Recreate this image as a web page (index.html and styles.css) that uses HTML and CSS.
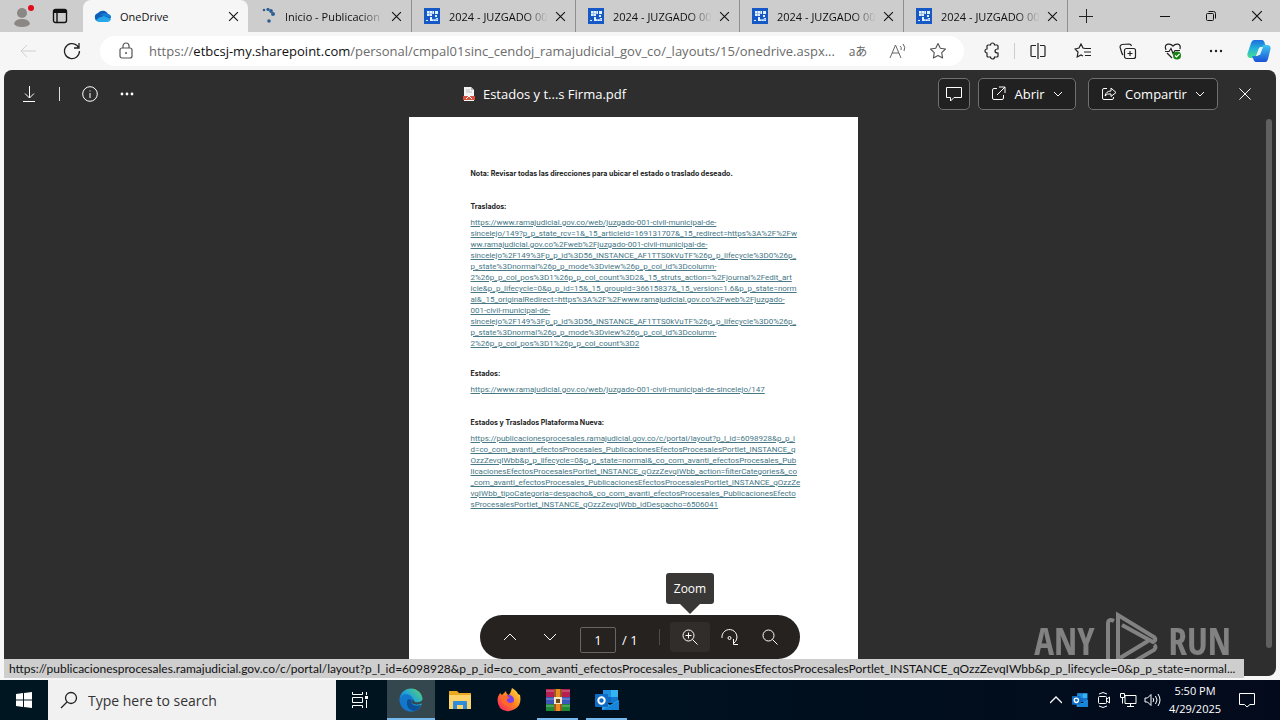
FILE: index.html
```html
<!DOCTYPE html>
<html lang="es">
<head>
<meta charset="utf-8">
<title>OneDrive</title>
<link rel="stylesheet" href="styles.css">
</head>
<body>
<svg class="defs" aria-hidden="true">
  <defs>
    <linearGradient id="gEdge" x1="0" y1="1" x2="1" y2="0"><stop offset="0" stop-color="#0c59a4"/><stop offset=".5" stop-color="#1b9de2"/><stop offset="1" stop-color="#5fd967"/></linearGradient>
    <linearGradient id="gFox" x1="1" y1="0" x2="0" y2="1"><stop offset="0" stop-color="#ffe84a"/><stop offset=".45" stop-color="#ff8a1e"/><stop offset="1" stop-color="#f5156c"/></linearGradient>
    <linearGradient id="gCopA" x1="0" y1="0" x2="0" y2="1"><stop offset="0" stop-color="#1c6fe0"/><stop offset=".5" stop-color="#24b5d8"/><stop offset="1" stop-color="#4be08c"/></linearGradient>
    <linearGradient id="gCopB" x1="0" y1="0" x2="0" y2="1"><stop offset="0" stop-color="#3ec8f0"/><stop offset="1" stop-color="#1a52d8"/></linearGradient>
    <symbol id="x" viewBox="0 0 10 10"><path d="M1 1l8 8M9 1L1 9" fill="none" stroke="currentColor"/></symbol>
    <symbol id="down" viewBox="0 0 10 6"><path d="M1 1l4 4 4-4" fill="none" stroke="currentColor"/></symbol>
    <symbol id="court" viewBox="0 0 16 16"><path d="M0 0h16v16H0z" fill="#1659c6"/><path d="M3 3h7v3H8v2H3zM11 3h3v3h-3zM11 7h2v2h-2zM6 9h2v2h4v-1h2v3H6zM2 12h2v1H2z" fill="#e4f2ff"/><path d="M3 5.500h5M5.500 3v5M8.500 3v3M8 11.500h6M9.500 11v2M12 10v3" stroke="#6ba2e6" stroke-width=".6" fill="none"/></symbol>
    <symbol id="outlook" viewBox="0 0 24 22"><path d="M8 1h15v13H8z" fill="#1068c0"/><path d="M8 1h8v7H8z" fill="#1e8fe0"/><path d="M16 1h7v7h-7z" fill="#34b4f0"/><path d="M16 8h7v6h-7z" fill="#1478d0"/><path d="M7 12l8 4 9-5v10H7z" fill="#2aa4e8"/><path d="M7 21l17-9v9z" fill="#1684d8"/><rect y="5" width="13" height="13" rx="1" fill="#0f6cc4"/><circle cx="6.500" cy="11.500" r="3.200" fill="none" stroke="#fff" stroke-width="2"/></symbol>
  </defs>
</svg>

<header class="tabstrip">
  <button class="profile" aria-label="Profile"><svg width="24" height="24" viewBox="0 0 24 24"><circle cx="10" cy="9" r="5" fill="#8b8785"/><path d="M2 20q1-5 8-5t8 5q-2 3-8 3t-8-3z" fill="#8b8785"/><circle cx="19" cy="4" r="3" fill="#e00b1c"/></svg></button>
  <button class="tabmenu" aria-label="Tab actions"><svg width="16" height="16" viewBox="0 0 16 16"><rect x="1.500" y="1.500" width="13" height="13" rx="2" fill="none" stroke="#111" stroke-width="1.400"/><path d="M1 2h14v3H1z" fill="#111"/><path d="M5 5v9" stroke="#111" stroke-width="1.400"/></svg></button>
  <nav class="tabs">
    <div class="tab active"><svg width="18" height="16" viewBox="0 0 18 16"><path d="M1 10a4 4 0 0 1 3-5 6 6 0 0 1 10 1 4 4 0 0 1 3 4l-4 3H4q-3 0-3-3z" fill="#0f5fb8"/><path d="M6 7q4-3 8-1 3 1 3 4l-6-2z" fill="#1680d8"/><path d="M2 12q3-3 8-4l7 3q-1 3-4 3H5q-2 0-3-2z" fill="#28a8ea"/></svg><span>OneDrive</span><button aria-label="Close tab"><svg width="11" height="11"><use href="#x"/></svg></button></div>
    <div class="tab"><svg width="16" height="16" viewBox="0 0 16 16" fill="#2c5f92"><circle cx="4" cy="2" r="1.300"/><circle cx="8" cy="1.500" r="1.600"/><circle cx="11" cy="3" r="1.900"/><circle cx="13" cy="6" r="2"/><circle cx="9" cy="13" r="1.800"/></svg><span>Inicio - Publicacion</span><button aria-label="Close tab"><svg width="11" height="11"><use href="#x"/></svg></button></div>
    <div class="tab"><svg width="16" height="16"><use href="#court"/></svg><span>2024 - JUZGADO 00</span><button aria-label="Close tab"><svg width="11" height="11"><use href="#x"/></svg></button></div>
    <div class="tab"><svg width="16" height="16"><use href="#court"/></svg><span>2024 - JUZGADO 00</span><button aria-label="Close tab"><svg width="11" height="11"><use href="#x"/></svg></button></div>
    <div class="tab"><svg width="16" height="16"><use href="#court"/></svg><span>2024 - JUZGADO 00</span><button aria-label="Close tab"><svg width="11" height="11"><use href="#x"/></svg></button></div>
    <div class="tab"><svg width="16" height="16"><use href="#court"/></svg><span>2024 - JUZGADO 00</span><button aria-label="Close tab"><svg width="11" height="11"><use href="#x"/></svg></button></div>
  </nav>
  <button class="newtab" aria-label="New tab"><svg width="14" height="14" viewBox="0 0 14 14"><path d="M7.500 0v14M0 7.500h14" stroke="#222"/></svg></button>
  <div class="window-controls">
    <button aria-label="Minimize"><svg width="10" height="10"><path d="M0 5.500h10" stroke="#111"/></svg></button>
    <button aria-label="Restore"><svg width="12" height="12" viewBox="0 0 12 12" fill="none" stroke="#111"><rect x="1.500" y="3.500" width="7" height="7" rx="1"/><path d="M3.500 1.500h5q2 0 2 2v5"/></svg></button>
    <button aria-label="Close"><svg width="12" height="12"><use href="#x"/></svg></button>
  </div>
</header>

<div class="toolbar">
  <button class="back" aria-label="Back"><svg width="16" height="14" viewBox="0 0 16 14" fill="none" stroke="#cfcfcf"><path d="M16 7H1M7 1L1 7l6 6"/></svg></button>
  <button class="reload" aria-label="Reload"><svg width="18" height="18" viewBox="0 0 18 18" fill="none" stroke="#222" stroke-width="1.300"><path d="M16.500 9a7.500 7.500 0 1 1-2.500-5.500L16 6M16 1v5h-5"/></svg></button>
  <div class="address">
    <svg class="lock" width="14" height="18" viewBox="0 0 14 18" fill="none" stroke="#555" stroke-width="1.200"><rect x="1" y="6" width="12" height="10" rx="2"/><path d="M4 6V4a3 3 0 0 1 6 0v2"/><circle cx="7" cy="11" r="1" fill="#555" stroke="none"/></svg>
    <a class="url" href="#"><b>https://</b>etbcsj-my.sharepoint.com<b>/personal/cmpal01sinc_cendoj_ramajudicial_gov_co/_layouts/15/onedrive.aspx...</b></a>
    <button class="translate" aria-label="Translate">aあ</button>
    <button aria-label="Read aloud"><svg width="18" height="16" viewBox="0 0 18 16" fill="none" stroke="#666"><path d="M1 15L6.500 2 12 15M3 10h7M11 3q2 1 1 4M14 1q3 3 1 7"/></svg></button>
    <button aria-label="Favorite"><svg width="18" height="18" viewBox="0 0 18 18" fill="none" stroke="#555" stroke-width="1.100"><path d="M9 1.500l2.300 4.800 5.200.7-3.800 3.600.9 5.300L9 13.400l-4.600 2.500.9-5.300L1.500 7l5.200-.7z" stroke-linejoin="round"/></svg></button>
  </div>
  <div class="tools">
    <button aria-label="Extensions"><svg width="18" height="18" viewBox="0 0 18 18" fill="none" stroke="#222" stroke-width="1.200"><path d="M5 3h2.500a2 2 0 0 1 4 0H14q1 0 1 1v3q-3 0-3 2t3 2v3q0 1-1 1h-2.500a2 2 0 0 1-4 0H5q-1 0-1-1v-3a2 2 0 0 1 0-4V4q0-1 1-1z"/></svg></button>
    <i></i>
    <button aria-label="Split screen"><svg width="18" height="16" viewBox="0 0 18 16" fill="none" stroke="#222" stroke-width="1.200"><path d="M7 2.500H3q-1 0-1 1v9q0 1 1 1h4M11 2.500h4q1 0 1 1v9q0 1-1 1h-4M9 0v16"/></svg></button>
    <button aria-label="Favorites"><svg width="18" height="16" viewBox="0 0 18 16" fill="none" stroke="#222" stroke-width="1.200"><path d="M11 5.500L9 5 7 1 5 5 1 6l3 3-.8 5L7 12l2 1M11 5.500h6M10 9h7M11 12.500h6"/></svg></button>
    <button aria-label="Collections"><svg width="18" height="17" viewBox="0 0 18 17" fill="none" stroke="#222" stroke-width="1.200"><rect x="5.500" y="5.500" width="11" height="10" rx="2"/><path d="M11 8v5M8.500 10.500h5M4 12q-1-1-1.500-3L1 4q0-2 2-2.500L10 1q2 0 2.500 2"/></svg></button>
    <button aria-label="Performance"><svg width="18" height="17" viewBox="0 0 18 17" fill="none" stroke="#222" stroke-width="1.200"><path d="M2 7Q0 2 4 1.200q3-.5 5 1.800 2-2.300 5-1.800 3 .8 2 5M1 8.500h4l2-3 2 5 2-3h5M3 10l5 5"/><circle cx="13" cy="12.500" r="4" fill="#16820f" stroke="none"/><path d="M11 12.500l1.500 1.500 3-3" stroke="#fff"/></svg></button>
    <button aria-label="More"><svg width="16" height="4" fill="#222"><circle cx="3" cy="2" r="1.200"/><circle cx="8" cy="2" r="1.200"/><circle cx="13" cy="2" r="1.200"/></svg></button>
    <button aria-label="Copilot"><svg width="24" height="24" viewBox="0 0 24 24"><path d="M7 1h8q2 0 3 4l1 3h-5l-2 1-3 8q-1 3-4 2H3q-4-1-2-6L4 4q1-3 3-3z" fill="url(#gCopA)"/><path d="M17 23H9q-2 0-3-4l-1-2h5l2-1 3-8q1-3 4-2h2q4 1 2 6l-2 8q-1 3-2 3z" fill="url(#gCopB)"/><path d="M10 16l3-8h3l-3 8z" fill="#dff5fb"/></svg></button>
  </div>
</div>

<main class="stage">
  <section class="viewer">
    <div class="viewer-head">
      <div class="head-left">
        <button aria-label="Descargar"><svg width="14" height="16" viewBox="0 0 14 16" fill="none" stroke="#fff"><path d="M7.500 0v12M3 7.500L7.500 12 12 7.500M1 15.500h12"/></svg></button>
        <i></i>
        <button aria-label="Información"><svg width="16" height="16" viewBox="0 0 16 16" fill="none" stroke="#fff"><circle cx="8" cy="8" r="7.300"/><path d="M8 7v5M8 4.500v1"/></svg></button>
        <button class="more" aria-label="Más"><svg width="14" height="4" fill="#fff"><circle cx="2" cy="2" r="1.400"/><circle cx="7" cy="2" r="1.400"/><circle cx="12" cy="2" r="1.400"/></svg></button>
      </div>
      <div class="file"><svg width="14" height="16" viewBox="0 0 14 16"><path d="M2 1h7l3 3v11H2z" fill="#f4f4f4"/><path d="M9 1l3 3H9z" fill="#b8b8b8"/><path d="M4 4h4M4 6h6" stroke="#bbb"/><path d="M1 10h12v4H1z" fill="#d8503c"/><path d="M4 13l3-3 3 3" stroke="#fff" fill="none"/></svg><span>Estados y t...s Firma.pdf</span></div>
      <div class="head-right">
        <button class="box comment" aria-label="Comentarios"><svg width="16" height="16" viewBox="0 0 16 16" fill="none" stroke="#fff"><path d="M.5 1.500h15v10H8L4.500 15v-3.500h-4z"/></svg></button>
        <button class="box open"><svg width="15" height="15" viewBox="0 0 15 15" fill="none" stroke="#fff"><path d="M6 2.500H3q-1.500 0-1.500 1.500v8q0 1.500 1.500 1.500h8q1.500 0 1.500-1.500V9M8 1h6v6M14 1L6 9"/></svg>Abrir<svg class="chev" width="10" height="6"><use href="#down"/></svg></button>
        <button class="box share"><svg width="16" height="15" viewBox="0 0 16 15" fill="none" stroke="#fff"><path d="M6 2.500H3q-1.500 0-1.500 1.500v8q0 1.500 1.500 1.500h8q1.500 0 1.500-1.500v-1M4 10q1-5 6-5V2l5 4.500-5 4V8q-4-1-6 2z"/></svg>Compartir<svg class="chev" width="10" height="6"><use href="#down"/></svg></button>
        <button class="close-viewer" aria-label="Cerrar"><svg width="14" height="14" viewBox="0 0 10 10"><path d="M1 1l8 8M9 1L1 9" fill="none" stroke="#fff" stroke-width=".7"/></svg></button>
      </div>
    </div>
    <article class="page">
      <h1>Nota: Revisar todas las direcciones para ubicar el estado o traslado deseado.</h1>
      <h2>Traslados:</h2>
      <a href="#">https://www.ramajudicial.gov.co/web/juzgado-001-civil-municipal-de-<br>sincelejo/149?p_p_state_rcv=1&amp;_15_articleId=169131707&amp;_15_redirect=https%3A%2F%2Fw<br>ww.ramajudicial.gov.co%2Fweb%2Fjuzgado-001-civil-municipal-de-<br>sincelejo%2F149%3Fp_p_id%3D56_INSTANCE_AF1TTS0kVuTF%26p_p_lifecycle%3D0%26p_<br>p_state%3Dnormal%26p_p_mode%3Dview%26p_p_col_id%3Dcolumn-<br>2%26p_p_col_pos%3D1%26p_p_col_count%3D2&amp;_15_struts_action=%2Fjournal%2Fedit_art<br>icle&amp;p_p_lifecycle=0&amp;p_p_id=15&amp;_15_groupId=36615837&amp;_15_version=1.6&amp;p_p_state=norm<br>al&amp;_15_originalRedirect=https%3A%2F%2Fwww.ramajudicial.gov.co%2Fweb%2Fjuzgado-<br>001-civil-municipal-de-<br>sincelejo%2F149%3Fp_p_id%3D56_INSTANCE_AF1TTS0kVuTF%26p_p_lifecycle%3D0%26p_<br>p_state%3Dnormal%26p_p_mode%3Dview%26p_p_col_id%3Dcolumn-<br>2%26p_p_col_pos%3D1%26p_p_col_count%3D2</a>
      <h2 class="near">Estados:</h2>
      <a href="#">https://www.ramajudicial.gov.co/web/juzgado-001-civil-municipal-de-sincelejo/147</a>
      <h2>Estados y Traslados Plataforma Nueva:</h2>
      <a href="#">https://publicacionesprocesales.ramajudicial.gov.co/c/portal/layout?p_l_id=6098928&amp;p_p_i<br>d=co_com_avanti_efectosProcesales_PublicacionesEfectosProcesalesPortlet_INSTANCE_q<br>OzzZevqIWbb&amp;p_p_lifecycle=0&amp;p_p_state=normal&amp;_co_com_avanti_efectosProcesales_Pub<br>licacionesEfectosProcesalesPortlet_INSTANCE_qOzzZevqIWbb_action=filterCategories&amp;_co<br>_com_avanti_efectosProcesales_PublicacionesEfectosProcesalesPortlet_INSTANCE_qOzzZe<br>vqIWbb_tipoCategoria=despacho&amp;_co_com_avanti_efectosProcesales_PublicacionesEfecto<br>sProcesalesPortlet_INSTANCE_qOzzZevqIWbb_idDespacho=6506041</a>
    </article>
    <div class="scrollbar"></div>
    <div class="pager">
      <button aria-label="Página anterior"><svg width="14" height="8" viewBox="0 0 14 8"><path d="M1 7l6-6 6 6" fill="none" stroke="#fff"/></svg></button>
      <button aria-label="Página siguiente"><svg width="14" height="8" viewBox="0 0 14 8"><path d="M1 1l6 6 6-6" fill="none" stroke="#fff"/></svg></button>
      <label class="pagebox"><input type="text" value="1" aria-label="Página"><span>/ 1</span></label>
      <i></i>
      <button class="zoom" aria-label="Zoom"><svg width="16" height="16" viewBox="0 0 16 16" fill="none" stroke="#fff"><circle cx="6.500" cy="6.500" r="5.500"/><path d="M10.500 10.500l5 5M3.500 6.500h6M6.500 3.500v6"/></svg><span class="tip">Zoom</span></button>
      <button aria-label="Girar"><svg width="18" height="17" viewBox="0 0 18 17" fill="none" stroke="#fff"><path d="M1 9a7.500 7.500 0 1 1 12 5M12.500 10v5.500H17"/><circle cx="8.500" cy="9" r="1.500"/></svg></button>
      <button aria-label="Buscar"><svg width="16" height="16" viewBox="0 0 16 16" fill="none" stroke="#fff"><circle cx="6.500" cy="6.500" r="5.500"/><path d="M10.500 10.500l5 5"/></svg></button>
    </div>
  </section>
  <div class="watermark"><span>ANY</span><svg width="56" height="60" viewBox="0 0 56 60" fill="none" stroke="currentColor" stroke-width="4"><path d="M10 10q-6-3-6 3v42M14 48V4l36 22q3 3-1 5L18 14M19 57l31-18q3-3 0-5M16 47l28-17"/></svg><span>RUN</span></div>
  <div class="status">https://publicacionesprocesales.ramajudicial.gov.co/c/portal/layout?p_l_id=6098928&amp;p_p_id=co_com_avanti_efectosProcesales_PublicacionesEfectosProcesalesPortlet_INSTANCE_qOzzZevqIWbb&amp;p_p_lifecycle=0&amp;p_p_state=normal...</div>
</main>

<footer class="taskbar">
  <button class="start" aria-label="Start"><svg width="16" height="16" viewBox="0 0 16 16" fill="#fff"><path d="M0 2l7-1v6.500H0zM8 1l8-1v7.500H8zM0 8.500h7V15l-7-1zM8 8.500h8V16l-8-1z"/></svg></button>
  <label class="search"><svg width="18" height="18" viewBox="0 0 18 18" fill="none" stroke="#222" stroke-width="1.300"><circle cx="11" cy="7" r="5.500"/><path d="M7 11l-6 6"/></svg><input type="text" placeholder="Type here to search" aria-label="Search"></label>
  <button class="app view" aria-label="Task view"><svg width="18" height="16" viewBox="0 0 18 16" fill="none" stroke="#fff"><path d="M1.500 0v2.500h10V0M1.500 5.500h10v5h-10zM1.500 16v-2.500h10V16M15.500 0v3M15.500 8v8"/><path d="M14 4h3v3h-3z" fill="#fff" stroke="none"/></svg></button>
  <button class="app on" aria-label="Edge"><svg width="24" height="24" viewBox="0 0 24 24"><circle cx="12" cy="12" r="11.500" fill="url(#gEdge)"/><path d="M1 12C2 6 8 5 12 8q3 3 2 6-1 1 0 3 3 2 8 0-4 7-12 6Q1 21 1 12z" fill="#1378cc"/><path d="M8 13q-1 8 7 10 5-1 7-6-6 2-9-1-2-2 0-4-4-2-5 1z" fill="#0d4f96"/><path d="M12 14q4 5 12 1v-4q-2 4-8 3-2-1-1-3z" fill="#34474f"/></svg></button>
  <button class="app" aria-label="File Explorer"><svg width="24" height="24" viewBox="0 0 24 24"><path d="M1 3h8l2 2h12v15H1z" fill="#e9a820"/><path d="M1 7h22v14H1z" fill="#fcd36a"/><path d="M5 21v-7q0-1 1-1h12q1 0 1 1v7h-4v-4H9v4z" fill="#2f8cd8"/></svg></button>
  <button class="app" aria-label="Firefox"><svg width="24" height="24" viewBox="0 0 24 24"><path d="M15 0q5 3 6 6l2 1q2 10-5 14-9 5-15-1-5-8 0-15l2 2 4-4q0 3 3 4 2-3 3-7z" fill="url(#gFox)"/><circle cx="12" cy="12" r="5" fill="#7a3ff0"/><path d="M4 9q5-3 9 1-4 0-3 3 3 4 7 0-1 6-7 5-6-2-6-9z" fill="#ff6a28"/></svg></button>
  <button class="app run" aria-label="WinRAR"><svg width="24" height="24" viewBox="0 0 24 24"><path d="M0 1h24v8H0z" fill="#b52050"/><path d="M0 9h24v7H0z" fill="#3b58b8"/><path d="M0 16h24v7H0z" fill="#1f8a35"/><path d="M0 3h24M0 11h24M0 18h24" stroke="#ffffff" stroke-opacity=".4"/><path d="M8 1h8v22H8z" fill="#a0561c"/><path d="M10 1h4v22h-4z" fill="#e88e22"/><path d="M8 9h8v7H8z" fill="#f4e8c8"/><path d="M10 11h4v4h-4z" fill="#6a4a20"/></svg></button>
  <button class="app run" aria-label="Outlook"><svg width="24" height="22"><use href="#outlook"/></svg></button>
  <div class="tray">
    <button aria-label="Hidden icons"><svg width="12" height="8" viewBox="0 0 12 8" fill="none" stroke="#fff" stroke-width="1.300"><path d="M0 7l6-6 6 6"/></svg></button>
    <button aria-label="Outlook tray"><svg width="16" height="16"><use href="#outlook"/></svg></button>
    <button aria-label="Meet now"><svg width="14" height="16" viewBox="0 0 14 16" fill="none" stroke="#fff"><rect x="1.500" y="4.500" width="8" height="7" rx="1"/><path d="M10 7l2.500-2v6L10 9M2 2q4-3 8 0M2 14q4 3 8 0"/></svg></button>
    <button aria-label="Network"><svg width="17" height="14" viewBox="0 0 17 14" fill="none" stroke="#fff"><path d="M5 2.500h11v8H5zM10.500 11v2.500M7 13.500h7M2.500 5v5.500M.5.500h4v4h-4z"/></svg></button>
    <button aria-label="Volume"><svg width="17" height="14" viewBox="0 0 17 14" fill="none" stroke="#fff"><path d="M1 5h2.500L7 1.500v11L3.500 9H1zM9 5q1.500 2 0 4M11.500 3q3 4 0 8M14 1q4 6 0 12"/></svg></button>
    <time>5:50 PM<br>4/29/2025</time>
    <button class="notes" aria-label="Notifications"><svg width="16" height="16" viewBox="0 0 16 16" fill="none" stroke="#fff"><path d="M.5 1.500h15v11H11L8 15l-2.500-2.500h-5z"/></svg></button>
  </div>
</footer>
</body>
</html>
```
FILE: styles.css
```css
* { box-sizing: border-box; }
body {
  margin: 0;
  height: 100vh;
  display: flex;
  flex-direction: column;
  overflow: hidden;
  background: #f6f6f6;
  color: #111;
  font-family: "Open Sans", "Noto Sans", "Noto Sans CJK JP", sans-serif;
  font-size: 12px;
}
.defs { position: absolute; width: 0; height: 0; }
button {
  border: 0;
  padding: 0;
  background: none;
  color: inherit;
  font: inherit;
  display: flex;
  align-items: center;
  justify-content: center;
  flex: none;
}
svg { flex: none; }

.tabstrip { display: flex; height: 32px; flex: none; background: #cdcdcd; font-size: 11px; }
.profile { width: 48px; }
.tabmenu { width: 35px; padding: 0 11px 0 0; }
.tabs { display: flex; min-width: 0; }
.tab {
  display: flex;
  align-items: center;
  width: 164px;
  min-width: 0;
  padding: 0 9px 0 11px;
  border-right: 1px solid #8f8f8f;
}
.tab > svg { width: 18px; }
.tab span {
  flex: 1;
  min-width: 0;
  margin: 0 4px 0 8px;
  white-space: nowrap;
  -webkit-mask-image: linear-gradient(to right, #000 75%, transparent 98%);
  mask-image: linear-gradient(to right, #000 75%, transparent 98%);
}
.tab button { width: 12px; height: 20px; }
.tab.active { width: 165px; background: #f6f6f6; border: 0; border-radius: 8px 8px 0 0; }
.tab.active span { -webkit-mask-image: none; mask-image: none; }
.newtab { width: 36px; }
.window-controls { margin-left: auto; display: flex; }
.window-controls button { width: 46px; }

.toolbar { display: flex; align-items: center; height: 38px; flex: none; }
.back { width: 56px; }
.reload { width: 32px; }
.address {
  flex: 1;
  min-width: 0;
  height: 30px;
  margin-left: 12px;
  padding: 0 6px 0 19px;
  display: flex;
  align-items: center;
  background: #fff;
  border-radius: 15px;
}
.url {
  flex: 1;
  min-width: 0;
  margin-left: 16px;
  overflow: hidden;
  white-space: nowrap;
  color: #111;
  text-decoration: none;
  font-size: 13px;
}
.url b { font-weight: 400; color: #6b6b6b; }
.address button { width: 40px; color: #666; }
.address .translate { font-size: 12px; }
.tools { display: flex; align-items: center; padding-left: 5px; }
.tools button { width: 45px; }
.tools i { width: 1px; height: 16px; background: #ccc; }
.tools button:nth-of-type(6) { width: 42px; }
.tools button:last-child { width: 43px; }

.stage { position: relative; flex: 1; min-height: 0; padding: 0 4px 4px; }
.viewer {
  position: relative;
  height: 100%;
  overflow: hidden;
  background: #2e2e2e;
  color: #fff;
  border-radius: 8px;
}
.viewer-head {
  display: grid;
  grid-template-columns: 36% 1fr auto;
  align-items: center;
  height: 47px;
}
.head-left, .head-right, .file { display: flex; align-items: center; }
.head-left { padding-left: 5px; }
.head-left button { width: 40px; height: 32px; }
.head-left .more { width: 34px; }
.head-left i { width: 1px; height: 14px; margin: 0 10px; background: #ddd; }
.file { gap: 7px; font-size: 13px; }
.head-right { gap: 8px; font-size: 13px; }
.box { height: 32px; border: 1px solid #707070; border-radius: 5px; background: #212121; }
.comment { width: 32px; }
.open { width: 98px; gap: 8px; }
.share { width: 130px; gap: 8px; margin-left: 4px; }
.close-viewer { width: 38px; height: 32px; margin-right: 12px; }

.page {
  width: 449px;
  height: 100%;
  margin: 0 auto;
  padding: 51px 62px;
  position: relative;
  right: 7px;
  background: #fff;
  color: #222;
  font: 700 7px/11px Inter, "Liberation Sans", sans-serif;
  white-space: nowrap;
}
.page h1, .page h2 { margin: 0; font-size: inherit; }
.page h2 { margin: 22px 0 5px; }
.page .near { margin-top: 19px; }
.page a { display: block; color: #467886; font: 400 8px/11px Roboto, sans-serif; }
.scrollbar {
  position: absolute;
  top: 49px;
  right: 4px;
  bottom: 28px;
  width: 6px;
  border-radius: 3px;
  background: #606060;
}
.pager {
  position: absolute;
  left: 50%;
  bottom: 17px;
  width: 320px;
  height: 44px;
  margin-left: -160px;
  padding: 0 10px;
  display: flex;
  align-items: center;
  border-radius: 22px;
  background: #252220;
}
.pager > button { width: 40px; height: 30px; }
.pager i { width: 1px; height: 16px; margin-right: 10px; background: #504c49; }
.pagebox { display: flex; align-items: center; flex: 1; padding: 6px 0 0 10px; gap: 6px; font-size: 13px; }
.pagebox input {
  width: 36px;
  height: 26px;
  border: 1px solid #666;
  border-radius: 2px;
  background: #252220;
  color: #fff;
  text-align: center;
  font: inherit;
}
.zoom { position: relative; border-radius: 4px; background: #302d2b; }
.tip {
  position: absolute;
  bottom: 48px;
  left: -4px;
  width: 48px;
  padding: 7px 0 6px;
  line-height: 18px;
  border-radius: 3px;
  background: #3a3836;
  text-align: center;
}
.tip::after {
  content: "";
  position: absolute;
  top: 100%;
  left: 14px;
  border: 10px solid transparent;
  border-top-color: #3a3836;
  border-bottom: 0;
}
.status {
  position: absolute;
  left: 4px;
  bottom: 2px;
  max-width: 1240px;
  height: 19px;
  padding: 0 9px 0 5px;
  overflow: hidden;
  white-space: nowrap;
  line-height: 19px;
  background: #cecece;
  font-family: Lato, sans-serif;
}
.watermark {
  position: absolute;
  right: 49px;
  bottom: 9px;
  display: flex;
  align-items: center;
  gap: 9px;
  color: #fff;
  opacity: .4;
  font: 300 37px/56px "Open Sans Condensed", "DejaVu Sans Condensed", sans-serif;
}

.taskbar {
  display: flex;
  height: 40px;
  flex: none;
  background: linear-gradient(to right, #001620, #00101f 60%, #030a1c);
  color: #fff;
}
.start { width: 48px; }
.search { display: flex; align-items: center; width: 288px; padding-left: 12px; background: #f1f1f1; gap: 8px; }
.search input { flex: 1; min-width: 0; border: 0; background: none; outline: 0; font: inherit; font-size: 14px; }
.search input::placeholder { color: #333; }
.app { width: 49px; }
.app.view { width: 51px; padding-right: 3px; }
.app.on { width: 48px; background: #34474f; box-shadow: inset 0 -2px #76b9ed; }
.app.run { width: 41px; margin: 0 4px; box-shadow: inset 0 -2px #76b9ed; }
.tray { margin-left: auto; display: flex; align-items: center; }
.tray button { width: 24px; height: 40px; }
.tray time { width: 62px; text-align: center; font-size: 11px; line-height: 18px; }
.tray .notes { width: 42px; margin-right: 12px; }
```
